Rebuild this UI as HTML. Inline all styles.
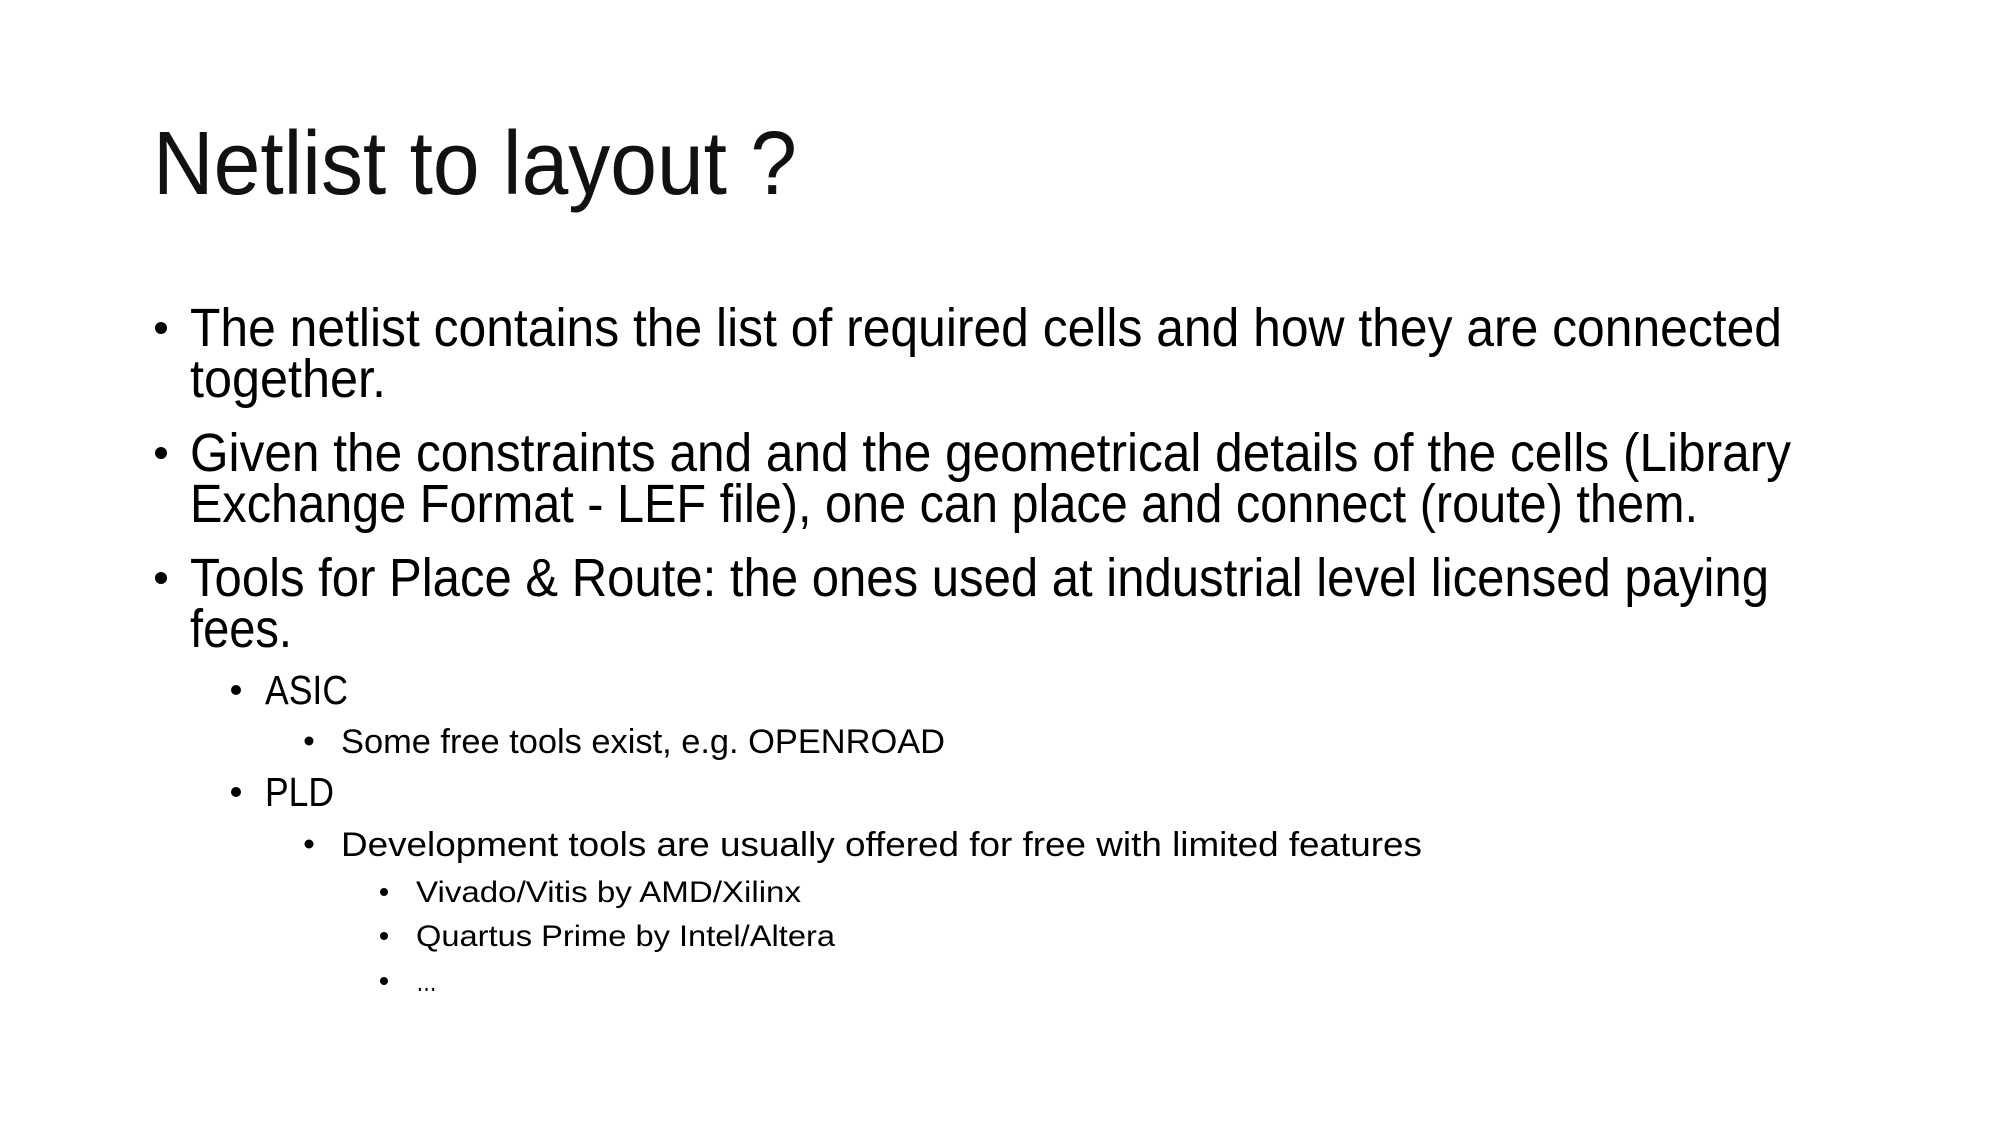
<!DOCTYPE html>
<html><head><meta charset="utf-8"><style>html,body{margin:0;padding:0;background:#fff}svg{display:block}</style></head>
<body>
<svg width="2000" height="1125" viewBox="0 0 2000 1125" xmlns="http://www.w3.org/2000/svg" font-family="Liberation Sans, DejaVu Sans, sans-serif" fill="#000">
<rect width="2000" height="1125" fill="#fff"/>
<text x="153" y="194" font-size="90" textLength="644" lengthAdjust="spacingAndGlyphs" font-weight="300" fill="#111">Netlist to layout ?</text>
<g font-size="54">
<circle cx="161" cy="328" r="6"/>
<text x="190" y="346" textLength="1592" lengthAdjust="spacingAndGlyphs">The netlist contains the list of required cells and how they are connected</text>
<text x="190" y="397" textLength="196" lengthAdjust="spacingAndGlyphs">together.</text>
<circle cx="161" cy="453" r="6"/>
<text x="190" y="471" textLength="1601" lengthAdjust="spacingAndGlyphs">Given the constraints and and the geometrical details of the cells (Library</text>
<text x="190" y="522" textLength="1508" lengthAdjust="spacingAndGlyphs">Exchange Format - LEF file), one can place and connect (route) them.</text>
<circle cx="161" cy="578" r="6"/>
<text x="190" y="596" textLength="1579" lengthAdjust="spacingAndGlyphs">Tools for Place &amp; Route: the ones used at industrial level licensed paying</text>
<text x="190" y="647" textLength="102" lengthAdjust="spacingAndGlyphs">fees.</text>
</g>
<g font-size="41">
<circle cx="236" cy="690" r="5"/>
<text x="265" y="704" textLength="83" lengthAdjust="spacingAndGlyphs">ASIC</text>
<circle cx="236" cy="792" r="5"/>
<text x="265" y="806" textLength="69" lengthAdjust="spacingAndGlyphs">PLD</text>
</g>
<g font-size="34">
<circle cx="309" cy="741" r="4.5"/>
<text x="341" y="753" textLength="604" lengthAdjust="spacingAndGlyphs">Some free tools exist, e.g. OPENROAD</text>
<circle cx="309" cy="844" r="4.5"/>
<text x="341" y="856" textLength="1081" lengthAdjust="spacingAndGlyphs">Development tools are usually offered for free with limited features</text>
</g>
<g font-size="30">
<circle cx="384" cy="892" r="4"/>
<text x="416" y="902" textLength="385" lengthAdjust="spacingAndGlyphs">Vivado/Vitis by AMD/Xilinx</text>
<circle cx="384" cy="936" r="4"/>
<text x="416" y="946" textLength="419" lengthAdjust="spacingAndGlyphs">Quartus Prime by Intel/Altera</text>
<circle cx="384" cy="981" r="4"/>
<text x="416" y="991" textLength="21" lengthAdjust="spacingAndGlyphs">…</text>
</g>
</svg>
</body></html>
